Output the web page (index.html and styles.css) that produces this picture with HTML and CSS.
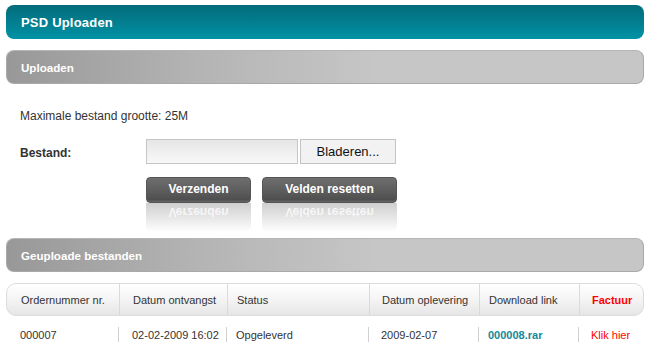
FILE: index.html
```html
<!DOCTYPE html>
<html lang="nl">
<head>
<meta charset="utf-8">
<title>PSD Uploaden</title>
<link rel="stylesheet" href="styles.css">
</head>
<body>
<div class="page">
  <div class="titlebar">PSD Uploaden</div>
  <div class="section">Uploaden</div>
  <div class="form">
    <p class="note">Maximale bestand grootte: 25M</p>
    <div class="row">
      <span class="label">Bestand:</span>
      <div class="file">
        <span class="input"></span>
        <span class="browse">Bladeren...</span>
      </div>
    </div>
    <div class="actions">
      <div class="btnwrap btn-send">
        <span class="btn">Verzenden</span>
        <span class="reflect">Verzenden</span>
      </div>
      <div class="btnwrap btn-reset">
        <span class="btn">Velden resetten</span>
        <span class="reflect">Velden resetten</span>
      </div>
    </div>
  </div>
  <div class="section">Geuploade bestanden</div>
  <div class="table">
    <div class="thead">
      <span class="c1">Ordernummer nr.</span>
      <span class="c2">Datum ontvangst</span>
      <span class="c3">Status</span>
      <span class="c4">Datum oplevering</span>
      <span class="c5">Download link</span>
      <span class="c6 red-b">Factuur</span>
    </div>
    <div class="trow">
      <span class="c1">000007</span>
      <span class="c2">02-02-2009 16:02</span>
      <span class="c3">Opgeleverd</span>
      <span class="c4">2009-02-07</span>
      <span class="c5 dl">000008.rar</span>
      <span class="c6 red">Klik hier</span>
    </div>
  </div>
</div>
</body>
</html>
```

FILE: styles.css
```css
* { box-sizing: border-box; }
html, body { margin: 0; padding: 0; background: #fff; }
body {
  font-family: "Liberation Sans", Arial, sans-serif;
  font-size: 12px;
  color: #333;
}
.page {
  padding: 5px 6px 0 6px;
  display: flex;
  flex-direction: column;
}
.titlebar {
  height: 34px;
  border-radius: 8px;
  background: linear-gradient(to bottom, #036c7b 0%, #027e8f 50%, #0192a6 100%);
  color: #fff;
  font-weight: bold;
  font-size: 13px;
  letter-spacing: 0.2px;
  padding-left: 15px;
  display: flex;
  align-items: center;
  margin-bottom: 11px;
}
.section {
  height: 34px;
  border-radius: 8px;
  border: 1px solid #a9a9a9;
  border-top-color: #b5b5b5;
  background: linear-gradient(to right, #989898 0%, #b4b4b4 30%, #c6c6c6 58%, #c6c6c6 100%);
  color: #fff;
  font-weight: bold;
  font-size: 11.6px;
  padding-left: 14px;
  display: flex;
  align-items: center;
}
.form {
  padding: 24px 0 6px 14px;
  display: flex;
  flex-direction: column;
}
.note {
  margin: 0;
  line-height: 16px;
  height: 16px;
}
.row {
  margin-top: 15px;
  display: flex;
  align-items: center;
  height: 25px;
}
.label {
  width: 126px;
  font-weight: bold;
  padding-top: 2px;
}
.file {
  display: flex;
  gap: 2px;
}
.input {
  width: 152px;
  height: 25px;
  border: 1px solid #c6c6c6;
  background: linear-gradient(to bottom, #e6e6e6, #f8f8f8);
}
.browse {
  width: 96px;
  height: 25px;
  border: 1px solid #c3c3c3;
  background: #f2f2f2;
  color: #111;
  font-size: 13px;
  display: flex;
  align-items: center;
  justify-content: center;
}
.actions {
  margin-top: 13px;
  margin-left: 126px;
  display: flex;
  gap: 11px;
}
.btnwrap {
  display: flex;
  flex-direction: column;
}
.btn-send { width: 105px; }
.btn-reset { width: 135px; }
.btn {
  height: 26px;
  border-radius: 4px;
  background: linear-gradient(to bottom, #6e6e6e 0%, #5e5e5e 50%, #4f4f4f 90%, #666 100%);
  border: 1px solid #555;
  color: #fff;
  font-weight: bold;
  font-size: 12px;
  display: flex;
  align-items: center;
  justify-content: center;
  padding-bottom: 2px;
}
.reflect {
  height: 29px;
  border-radius: 6px 6px 0 0;
  background: linear-gradient(to top, #cfcfcf 0%, #e4e4e4 45%, #ffffff 100%);
  color: #f6f6f6;
  font-weight: bold;
  font-size: 12px;
  line-height: 16px;
  transform: scaleY(-1);
  display: flex;
  align-items: flex-end;
  justify-content: center;
  padding-bottom: 1px;
  overflow: hidden;
}
.table {
  margin-top: 11px;
  display: flex;
  flex-direction: column;
  font-size: 11px;
}
.thead, .trow {
  display: grid;
  grid-template-columns: 112px 108px 142px 110px 100px 1fr;
}
.thead {
  height: 33px;
  border: 1px solid #dcdcdc;
  border-radius: 10px;
  background: linear-gradient(to bottom, #ffffff 0%, #f4f4f4 50%, #e6e6e6 100%);
}
.thead span, .trow span {
  display: flex;
  align-items: center;
  white-space: nowrap;
}
.thead span + span { border-left: 1px solid #dadada; }
.trow {
  margin-top: 11px;
  height: 15px;
}
.trow span + span { border-left: 1px solid #d0d0d0; }
.c1 { padding-left: 14px; }
.c2 { padding-left: 13px; }
.c3 { padding-left: 9px; }
.c4 { padding-left: 12px; }
.c5 { padding-left: 9px; }
.c6 { padding-left: 12px; }
.red-b { color: #f00; font-weight: bold; }
.red { color: #f00; }
.dl { color: #13899b; font-weight: bold; }
```
